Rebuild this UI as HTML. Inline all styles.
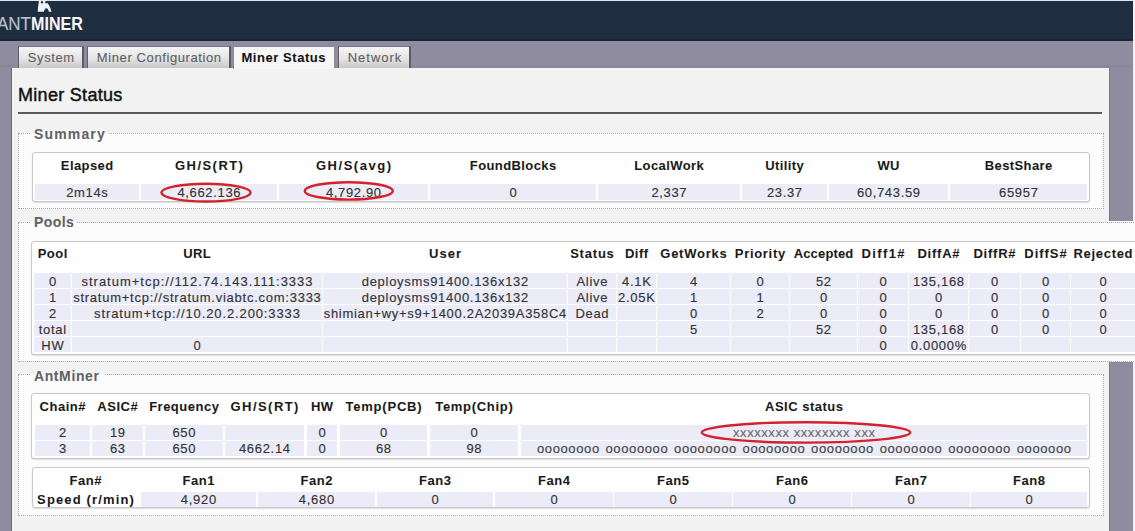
<!DOCTYPE html>
<html><head><meta charset="utf-8"><title>Miner Status</title>
<style>
html,body{margin:0;padding:0;}
body{width:1135px;height:531px;overflow:hidden;position:relative;font-family:"Liberation Sans",sans-serif;}
body>div{position:absolute;}
.t{box-sizing:border-box;line-height:20px;height:20px;white-space:pre;overflow:visible;-webkit-text-stroke:0.15px currentColor;}
</style></head><body>
<div style="left:0px;top:0px;width:1135px;height:531px;background:#f2f2f2"></div>
<div style="left:0px;top:0px;width:1133px;height:531px;background:#8e8c9e"></div>
<div style="left:0px;top:0px;width:1133px;height:41px;background:#1f2d41"></div>
<div style="left:0px;top:0px;width:1133px;height:1px;background:#dfe6ec"></div>
<div style="left:0px;top:39px;width:1133px;height:2px;background:#1b2538"></div>
<div style="left:0px;top:65px;width:1133px;height:3px;background:#8a889a"></div>
<div style="left:11px;top:68px;width:1097px;height:463px;background:#f2f2f3;border-left:1px solid #6f6c7c;border-right:1px solid #7a7888"></div>
<div style="left:1109px;top:221px;width:26px;height:141px;background:#fcfcfd"></div>
<svg style="position:absolute;left:0;top:0" width="120" height="41" viewBox="0 0 120 41">
<path d="M39 0.6 L45.6 0.6 C47.6 3 50.4 6.6 51.5 11.8 L48.8 11.8 C48.5 9.6 47.6 8.2 46.4 8.2 C45.2 8.2 44.3 9.6 44 11.8 L37.7 11.8 C37.9 7.5 38.6 3.5 39 0.6 Z" fill="#eef2f6"/>
<ellipse cx="42" cy="2.2" rx="1.1" ry="1.3" fill="#1f2d41"/><ellipse cx="46.3" cy="2.3" rx="1.1" ry="1.3" fill="#1f2d41"/>
</svg>
<div class="t" style="left:-40px;top:13.59px;width:71px;font-size:18.5px;color:#b9c2cc;letter-spacing:0.0px;text-align:right;transform:scaleX(0.92);transform-origin:100% 50%">ANT</div>
<div class="t" style="left:31px;top:13.59px;width:89px;font-size:18.5px;font-weight:bold;-webkit-text-stroke:0.05px currentColor;color:#f4f6f8;letter-spacing:0px;text-align:left;transform:scaleX(0.87);transform-origin:0 50%">MINER</div>
<div style="left:18px;top:46px;width:66px;height:22px;background:linear-gradient(#f6f6f6,#e4e4e4 55%,#c8c8c8);border-left:1px solid #5f5d6b;border-top:1px solid #76748a;border-right:2px solid #5d5a68;box-sizing:border-box"></div>
<div class="t" style="left:18px;top:47.50px;width:66px;font-size:13px;color:#606060;letter-spacing:0.6px;text-align:center;padding-left:0.60px;-webkit-text-stroke:0.1px #606060">System</div>
<div style="left:87px;top:46px;width:144px;height:22px;background:linear-gradient(#f6f6f6,#e4e4e4 55%,#c8c8c8);border-left:1px solid #5f5d6b;border-top:1px solid #76748a;border-right:2px solid #5d5a68;box-sizing:border-box"></div>
<div class="t" style="left:87px;top:47.50px;width:144px;font-size:13px;color:#606060;letter-spacing:0.6px;text-align:center;padding-left:0.60px;-webkit-text-stroke:0.1px #606060">Miner Configuration</div>
<div style="left:233px;top:46px;width:101px;height:23px;background:#f6f6f7;border-left:1px solid #8a8898;border-top:1px solid #8a8898;box-sizing:border-box"></div>
<div class="t" style="left:233px;top:47.50px;width:101px;font-size:13px;font-weight:bold;-webkit-text-stroke:0.05px currentColor;color:#111;letter-spacing:0.55px;text-align:center;padding-left:0.55px;">Miner Status</div>
<div style="left:338px;top:46px;width:73px;height:22px;background:linear-gradient(#f6f6f6,#e4e4e4 55%,#c8c8c8);border-left:1px solid #5f5d6b;border-top:1px solid #76748a;border-right:2px solid #5d5a68;box-sizing:border-box"></div>
<div class="t" style="left:338px;top:47.50px;width:73px;font-size:13px;color:#606060;letter-spacing:1.0px;text-align:center;padding-left:1.00px;-webkit-text-stroke:0.1px #606060">Network</div>
<div class="t" style="left:18px;top:84.76px;width:182px;font-size:18px;color:#111;letter-spacing:0.3px;text-align:left;-webkit-text-stroke:0.45px #111">Miner Status</div>
<div style="left:18px;top:112px;width:1084px;height:2px;background:#5a5a5a"></div>
<div style="left:18px;top:133px;width:1086px;height:76px;border:1px dotted #a6a6a6;box-sizing:border-box;background:#fcfcfd"></div>
<div style="left:31px;top:133px;width:77px;height:1px;background:#fcfcfd"></div>
<div class="t" style="left:34px;top:123.65px;width:90px;font-size:14px;font-weight:bold;-webkit-text-stroke:0.05px currentColor;color:#626262;letter-spacing:1.15px;text-align:left;">Summary</div>
<div style="left:18px;top:222px;width:1142px;height:140px;border:1px dotted #a6a6a6;box-sizing:border-box;background:#fcfcfd"></div>
<div style="left:31px;top:222px;width:46px;height:1px;background:#fcfcfd"></div>
<div class="t" style="left:34px;top:212.15px;width:59px;font-size:14px;font-weight:bold;-webkit-text-stroke:0.05px currentColor;color:#626262;letter-spacing:0.4px;text-align:left;">Pools</div>
<div style="left:18px;top:374px;width:1086px;height:142px;border:1px dotted #a6a6a6;box-sizing:border-box;background:#fcfcfd"></div>
<div style="left:31px;top:374px;width:73px;height:1px;background:#fcfcfd"></div>
<div class="t" style="left:34px;top:365.65px;width:86px;font-size:14px;font-weight:bold;-webkit-text-stroke:0.05px currentColor;color:#626262;letter-spacing:0.6px;text-align:left;">AntMiner</div>
<div style="left:32px;top:152px;width:1058px;height:50px;background:#fff;border:1px solid #c9c9c9;border-radius:3px;box-sizing:border-box;box-shadow:0 1px 1px #ddd"></div>
<div style="left:35px;top:184px;width:104px;height:16px;background:#ececf8"></div>
<div style="left:141px;top:184px;width:136px;height:16px;background:#ececf8"></div>
<div style="left:279px;top:184px;width:149px;height:16px;background:#ececf8"></div>
<div style="left:430px;top:184px;width:166px;height:16px;background:#ececf8"></div>
<div style="left:598px;top:184px;width:142px;height:16px;background:#ececf8"></div>
<div style="left:742px;top:184px;width:85px;height:16px;background:#ececf8"></div>
<div style="left:829px;top:184px;width:119px;height:16px;background:#ececf8"></div>
<div style="left:950px;top:184px;width:137px;height:16px;background:#ececf8"></div>
<div class="t" style="left:35px;top:155.50px;width:104px;font-size:13px;font-weight:bold;-webkit-text-stroke:0.05px currentColor;color:#1a1a1a;letter-spacing:0.4px;text-align:center;padding-left:0.40px;">Elapsed</div>
<div class="t" style="left:35px;top:182.50px;width:104px;font-size:13px;color:#333;letter-spacing:0.65px;text-align:center;padding-left:0.65px;">2m14s</div>
<div class="t" style="left:141px;top:155.50px;width:136px;font-size:13px;font-weight:bold;-webkit-text-stroke:0.05px currentColor;color:#1a1a1a;letter-spacing:1.45px;text-align:center;padding-left:1.45px;">GH/S(RT)</div>
<div class="t" style="left:141px;top:182.50px;width:136px;font-size:13px;color:#333;letter-spacing:0.65px;text-align:center;padding-left:0.65px;">4,662.136</div>
<div class="t" style="left:279px;top:155.50px;width:149px;font-size:13px;font-weight:bold;-webkit-text-stroke:0.05px currentColor;color:#1a1a1a;letter-spacing:1.55px;text-align:center;padding-left:1.55px;">GH/S(avg)</div>
<div class="t" style="left:279px;top:182.50px;width:149px;font-size:13px;color:#333;letter-spacing:0.65px;text-align:center;padding-left:0.65px;">4,792.90</div>
<div class="t" style="left:430px;top:155.50px;width:166px;font-size:13px;font-weight:bold;-webkit-text-stroke:0.05px currentColor;color:#1a1a1a;letter-spacing:0.4px;text-align:center;padding-left:0.40px;">FoundBlocks</div>
<div class="t" style="left:430px;top:182.50px;width:166px;font-size:13px;color:#333;letter-spacing:0.65px;text-align:center;padding-left:0.65px;">0</div>
<div class="t" style="left:598px;top:155.50px;width:142px;font-size:13px;font-weight:bold;-webkit-text-stroke:0.05px currentColor;color:#1a1a1a;letter-spacing:0.4px;text-align:center;padding-left:0.40px;">LocalWork</div>
<div class="t" style="left:598px;top:182.50px;width:142px;font-size:13px;color:#333;letter-spacing:0.65px;text-align:center;padding-left:0.65px;">2,337</div>
<div class="t" style="left:742px;top:155.50px;width:85px;font-size:13px;font-weight:bold;-webkit-text-stroke:0.05px currentColor;color:#1a1a1a;letter-spacing:0.4px;text-align:center;padding-left:0.40px;">Utility</div>
<div class="t" style="left:742px;top:182.50px;width:85px;font-size:13px;color:#333;letter-spacing:0.65px;text-align:center;padding-left:0.65px;">23.37</div>
<div class="t" style="left:829px;top:155.50px;width:119px;font-size:13px;font-weight:bold;-webkit-text-stroke:0.05px currentColor;color:#1a1a1a;letter-spacing:0.4px;text-align:center;padding-left:0.40px;">WU</div>
<div class="t" style="left:829px;top:182.50px;width:119px;font-size:13px;color:#333;letter-spacing:0.65px;text-align:center;padding-left:0.65px;">60,743.59</div>
<div class="t" style="left:950px;top:155.50px;width:137px;font-size:13px;font-weight:bold;-webkit-text-stroke:0.05px currentColor;color:#1a1a1a;letter-spacing:0.4px;text-align:center;padding-left:0.40px;">BestShare</div>
<div class="t" style="left:950px;top:182.50px;width:137px;font-size:13px;color:#333;letter-spacing:0.65px;text-align:center;padding-left:0.65px;">65957</div>
<div style="left:31px;top:241px;width:1129px;height:114px;background:#fff;border:1px solid #c9c9c9;border-radius:3px;box-sizing:border-box;box-shadow:0 1px 1px #ddd"></div>
<div class="t" style="left:34px;top:243.50px;width:37px;font-size:13px;font-weight:bold;-webkit-text-stroke:0.05px currentColor;color:#1a1a1a;letter-spacing:0.45px;text-align:center;padding-left:0.45px;">Pool</div>
<div class="t" style="left:72px;top:243.50px;width:250px;font-size:13px;font-weight:bold;-webkit-text-stroke:0.05px currentColor;color:#1a1a1a;letter-spacing:0.45px;text-align:center;padding-left:0.45px;">URL</div>
<div class="t" style="left:323px;top:243.50px;width:244px;font-size:13px;font-weight:bold;-webkit-text-stroke:0.05px currentColor;color:#1a1a1a;letter-spacing:1.0px;text-align:center;padding-left:1.00px;">User</div>
<div class="t" style="left:568px;top:243.50px;width:48px;font-size:13px;font-weight:bold;-webkit-text-stroke:0.05px currentColor;color:#1a1a1a;letter-spacing:0.8px;text-align:center;padding-left:0.80px;">Status</div>
<div class="t" style="left:617px;top:243.50px;width:39px;font-size:13px;font-weight:bold;-webkit-text-stroke:0.05px currentColor;color:#1a1a1a;letter-spacing:0.45px;text-align:center;padding-left:0.45px;">Diff</div>
<div class="t" style="left:657px;top:243.50px;width:73px;font-size:13px;font-weight:bold;-webkit-text-stroke:0.05px currentColor;color:#1a1a1a;letter-spacing:0.75px;text-align:center;padding-left:0.75px;">GetWorks</div>
<div class="t" style="left:731px;top:243.50px;width:58px;font-size:13px;font-weight:bold;-webkit-text-stroke:0.05px currentColor;color:#1a1a1a;letter-spacing:0.7px;text-align:center;padding-left:0.70px;">Priority</div>
<div class="t" style="left:790px;top:243.50px;width:67px;font-size:13px;font-weight:bold;-webkit-text-stroke:0.05px currentColor;color:#1a1a1a;letter-spacing:0.15px;text-align:center;padding-left:0.15px;">Accepted</div>
<div class="t" style="left:858px;top:243.50px;width:50px;font-size:13px;font-weight:bold;-webkit-text-stroke:0.05px currentColor;color:#1a1a1a;letter-spacing:1.4px;text-align:center;padding-left:1.40px;">Diff1#</div>
<div class="t" style="left:909px;top:243.50px;width:59px;font-size:13px;font-weight:bold;-webkit-text-stroke:0.05px currentColor;color:#1a1a1a;letter-spacing:0.75px;text-align:center;padding-left:0.75px;">DiffA#</div>
<div class="t" style="left:969px;top:243.50px;width:51px;font-size:13px;font-weight:bold;-webkit-text-stroke:0.05px currentColor;color:#1a1a1a;letter-spacing:0.75px;text-align:center;padding-left:0.75px;">DiffR#</div>
<div class="t" style="left:1021px;top:243.50px;width:49px;font-size:13px;font-weight:bold;-webkit-text-stroke:0.05px currentColor;color:#1a1a1a;letter-spacing:0.95px;text-align:center;padding-left:0.95px;">DiffS#</div>
<div class="t" style="left:1071px;top:243.50px;width:64px;font-size:13px;font-weight:bold;-webkit-text-stroke:0.05px currentColor;color:#1a1a1a;letter-spacing:0.7px;text-align:center;padding-left:0.70px;">Rejected</div>
<div style="left:34px;top:273px;width:37px;height:15px;background:#ececf8"></div>
<div style="left:72px;top:273px;width:250px;height:15px;background:#ececf8"></div>
<div style="left:323px;top:273px;width:244px;height:15px;background:#ececf8"></div>
<div style="left:568px;top:273px;width:48px;height:15px;background:#ececf8"></div>
<div style="left:617px;top:273px;width:39px;height:15px;background:#ececf8"></div>
<div style="left:657px;top:273px;width:73px;height:15px;background:#ececf8"></div>
<div style="left:731px;top:273px;width:58px;height:15px;background:#ececf8"></div>
<div style="left:790px;top:273px;width:67px;height:15px;background:#ececf8"></div>
<div style="left:858px;top:273px;width:50px;height:15px;background:#ececf8"></div>
<div style="left:909px;top:273px;width:59px;height:15px;background:#ececf8"></div>
<div style="left:969px;top:273px;width:51px;height:15px;background:#ececf8"></div>
<div style="left:1021px;top:273px;width:49px;height:15px;background:#ececf8"></div>
<div style="left:1071px;top:273px;width:64px;height:15px;background:#ececf8"></div>
<div class="t" style="left:34px;top:271.50px;width:37px;font-size:13px;color:#333;letter-spacing:0.7px;text-align:center;padding-left:0.70px;">0</div>
<div class="t" style="left:72px;top:271.50px;width:250px;font-size:13px;color:#333;letter-spacing:1.0px;text-align:center;padding-left:1.00px;">stratum+tcp://112.74.143.111:3333</div>
<div class="t" style="left:323px;top:271.50px;width:244px;font-size:13px;color:#333;letter-spacing:0.7px;text-align:center;padding-left:0.70px;">deploysms91400.136x132</div>
<div class="t" style="left:568px;top:271.50px;width:48px;font-size:13px;color:#333;letter-spacing:0.7px;text-align:center;padding-left:0.70px;">Alive</div>
<div class="t" style="left:617px;top:271.50px;width:39px;font-size:13px;color:#333;letter-spacing:0.7px;text-align:center;padding-left:0.70px;">4.1K</div>
<div class="t" style="left:657px;top:271.50px;width:73px;font-size:13px;color:#333;letter-spacing:0.7px;text-align:center;padding-left:0.70px;">4</div>
<div class="t" style="left:731px;top:271.50px;width:58px;font-size:13px;color:#333;letter-spacing:0.7px;text-align:center;padding-left:0.70px;">0</div>
<div class="t" style="left:790px;top:271.50px;width:67px;font-size:13px;color:#333;letter-spacing:0.7px;text-align:center;padding-left:0.70px;">52</div>
<div class="t" style="left:858px;top:271.50px;width:50px;font-size:13px;color:#333;letter-spacing:0.7px;text-align:center;padding-left:0.70px;">0</div>
<div class="t" style="left:909px;top:271.50px;width:59px;font-size:13px;color:#333;letter-spacing:0.7px;text-align:center;padding-left:0.70px;">135,168</div>
<div class="t" style="left:969px;top:271.50px;width:51px;font-size:13px;color:#333;letter-spacing:0.7px;text-align:center;padding-left:0.70px;">0</div>
<div class="t" style="left:1021px;top:271.50px;width:49px;font-size:13px;color:#333;letter-spacing:0.7px;text-align:center;padding-left:0.70px;">0</div>
<div class="t" style="left:1071px;top:271.50px;width:64px;font-size:13px;color:#333;letter-spacing:0.7px;text-align:center;padding-left:0.70px;">0</div>
<div style="left:34px;top:289px;width:37px;height:15px;background:#ececf8"></div>
<div style="left:72px;top:289px;width:250px;height:15px;background:#ececf8"></div>
<div style="left:323px;top:289px;width:244px;height:15px;background:#ececf8"></div>
<div style="left:568px;top:289px;width:48px;height:15px;background:#ececf8"></div>
<div style="left:617px;top:289px;width:39px;height:15px;background:#ececf8"></div>
<div style="left:657px;top:289px;width:73px;height:15px;background:#ececf8"></div>
<div style="left:731px;top:289px;width:58px;height:15px;background:#ececf8"></div>
<div style="left:790px;top:289px;width:67px;height:15px;background:#ececf8"></div>
<div style="left:858px;top:289px;width:50px;height:15px;background:#ececf8"></div>
<div style="left:909px;top:289px;width:59px;height:15px;background:#ececf8"></div>
<div style="left:969px;top:289px;width:51px;height:15px;background:#ececf8"></div>
<div style="left:1021px;top:289px;width:49px;height:15px;background:#ececf8"></div>
<div style="left:1071px;top:289px;width:64px;height:15px;background:#ececf8"></div>
<div class="t" style="left:34px;top:287.50px;width:37px;font-size:13px;color:#333;letter-spacing:0.7px;text-align:center;padding-left:0.70px;">1</div>
<div class="t" style="left:72px;top:287.50px;width:250px;font-size:13px;color:#333;letter-spacing:0.75px;text-align:center;padding-left:0.75px;">stratum+tcp://stratum.viabtc.com:3333</div>
<div class="t" style="left:323px;top:287.50px;width:244px;font-size:13px;color:#333;letter-spacing:0.7px;text-align:center;padding-left:0.70px;">deploysms91400.136x132</div>
<div class="t" style="left:568px;top:287.50px;width:48px;font-size:13px;color:#333;letter-spacing:0.7px;text-align:center;padding-left:0.70px;">Alive</div>
<div class="t" style="left:617px;top:287.50px;width:39px;font-size:13px;color:#333;letter-spacing:0.7px;text-align:center;padding-left:0.70px;">2.05K</div>
<div class="t" style="left:657px;top:287.50px;width:73px;font-size:13px;color:#333;letter-spacing:0.7px;text-align:center;padding-left:0.70px;">1</div>
<div class="t" style="left:731px;top:287.50px;width:58px;font-size:13px;color:#333;letter-spacing:0.7px;text-align:center;padding-left:0.70px;">1</div>
<div class="t" style="left:790px;top:287.50px;width:67px;font-size:13px;color:#333;letter-spacing:0.7px;text-align:center;padding-left:0.70px;">0</div>
<div class="t" style="left:858px;top:287.50px;width:50px;font-size:13px;color:#333;letter-spacing:0.7px;text-align:center;padding-left:0.70px;">0</div>
<div class="t" style="left:909px;top:287.50px;width:59px;font-size:13px;color:#333;letter-spacing:0.7px;text-align:center;padding-left:0.70px;">0</div>
<div class="t" style="left:969px;top:287.50px;width:51px;font-size:13px;color:#333;letter-spacing:0.7px;text-align:center;padding-left:0.70px;">0</div>
<div class="t" style="left:1021px;top:287.50px;width:49px;font-size:13px;color:#333;letter-spacing:0.7px;text-align:center;padding-left:0.70px;">0</div>
<div class="t" style="left:1071px;top:287.50px;width:64px;font-size:13px;color:#333;letter-spacing:0.7px;text-align:center;padding-left:0.70px;">0</div>
<div style="left:34px;top:305px;width:37px;height:15px;background:#ececf8"></div>
<div style="left:72px;top:305px;width:250px;height:15px;background:#ececf8"></div>
<div style="left:323px;top:305px;width:244px;height:15px;background:#ececf8"></div>
<div style="left:568px;top:305px;width:48px;height:15px;background:#ececf8"></div>
<div style="left:617px;top:305px;width:39px;height:15px;background:#ececf8"></div>
<div style="left:657px;top:305px;width:73px;height:15px;background:#ececf8"></div>
<div style="left:731px;top:305px;width:58px;height:15px;background:#ececf8"></div>
<div style="left:790px;top:305px;width:67px;height:15px;background:#ececf8"></div>
<div style="left:858px;top:305px;width:50px;height:15px;background:#ececf8"></div>
<div style="left:909px;top:305px;width:59px;height:15px;background:#ececf8"></div>
<div style="left:969px;top:305px;width:51px;height:15px;background:#ececf8"></div>
<div style="left:1021px;top:305px;width:49px;height:15px;background:#ececf8"></div>
<div style="left:1071px;top:305px;width:64px;height:15px;background:#ececf8"></div>
<div class="t" style="left:34px;top:303.50px;width:37px;font-size:13px;color:#333;letter-spacing:0.7px;text-align:center;padding-left:0.70px;">2</div>
<div class="t" style="left:72px;top:303.50px;width:250px;font-size:13px;color:#333;letter-spacing:0.88px;text-align:center;padding-left:0.88px;">stratum+tcp://10.20.2.200:3333</div>
<div class="t" style="left:323px;top:303.50px;width:244px;font-size:13px;color:#333;letter-spacing:0.7px;text-align:center;padding-left:0.70px;">shimian+wy+s9+1400.2A2039A358C4</div>
<div class="t" style="left:568px;top:303.50px;width:48px;font-size:13px;color:#333;letter-spacing:0.7px;text-align:center;padding-left:0.70px;">Dead</div>
<div class="t" style="left:657px;top:303.50px;width:73px;font-size:13px;color:#333;letter-spacing:0.7px;text-align:center;padding-left:0.70px;">0</div>
<div class="t" style="left:731px;top:303.50px;width:58px;font-size:13px;color:#333;letter-spacing:0.7px;text-align:center;padding-left:0.70px;">2</div>
<div class="t" style="left:790px;top:303.50px;width:67px;font-size:13px;color:#333;letter-spacing:0.7px;text-align:center;padding-left:0.70px;">0</div>
<div class="t" style="left:858px;top:303.50px;width:50px;font-size:13px;color:#333;letter-spacing:0.7px;text-align:center;padding-left:0.70px;">0</div>
<div class="t" style="left:909px;top:303.50px;width:59px;font-size:13px;color:#333;letter-spacing:0.7px;text-align:center;padding-left:0.70px;">0</div>
<div class="t" style="left:969px;top:303.50px;width:51px;font-size:13px;color:#333;letter-spacing:0.7px;text-align:center;padding-left:0.70px;">0</div>
<div class="t" style="left:1021px;top:303.50px;width:49px;font-size:13px;color:#333;letter-spacing:0.7px;text-align:center;padding-left:0.70px;">0</div>
<div class="t" style="left:1071px;top:303.50px;width:64px;font-size:13px;color:#333;letter-spacing:0.7px;text-align:center;padding-left:0.70px;">0</div>
<div style="left:34px;top:321px;width:37px;height:15px;background:#ececf8"></div>
<div style="left:72px;top:321px;width:250px;height:15px;background:#ececf8"></div>
<div style="left:323px;top:321px;width:244px;height:15px;background:#ececf8"></div>
<div style="left:568px;top:321px;width:48px;height:15px;background:#ececf8"></div>
<div style="left:617px;top:321px;width:39px;height:15px;background:#ececf8"></div>
<div style="left:657px;top:321px;width:73px;height:15px;background:#ececf8"></div>
<div style="left:731px;top:321px;width:58px;height:15px;background:#ececf8"></div>
<div style="left:790px;top:321px;width:67px;height:15px;background:#ececf8"></div>
<div style="left:858px;top:321px;width:50px;height:15px;background:#ececf8"></div>
<div style="left:909px;top:321px;width:59px;height:15px;background:#ececf8"></div>
<div style="left:969px;top:321px;width:51px;height:15px;background:#ececf8"></div>
<div style="left:1021px;top:321px;width:49px;height:15px;background:#ececf8"></div>
<div style="left:1071px;top:321px;width:64px;height:15px;background:#ececf8"></div>
<div class="t" style="left:34px;top:319.50px;width:37px;font-size:13px;color:#333;letter-spacing:0.7px;text-align:center;padding-left:0.70px;">total</div>
<div class="t" style="left:657px;top:319.50px;width:73px;font-size:13px;color:#333;letter-spacing:0.7px;text-align:center;padding-left:0.70px;">5</div>
<div class="t" style="left:790px;top:319.50px;width:67px;font-size:13px;color:#333;letter-spacing:0.7px;text-align:center;padding-left:0.70px;">52</div>
<div class="t" style="left:858px;top:319.50px;width:50px;font-size:13px;color:#333;letter-spacing:0.7px;text-align:center;padding-left:0.70px;">0</div>
<div class="t" style="left:909px;top:319.50px;width:59px;font-size:13px;color:#333;letter-spacing:0.7px;text-align:center;padding-left:0.70px;">135,168</div>
<div class="t" style="left:969px;top:319.50px;width:51px;font-size:13px;color:#333;letter-spacing:0.7px;text-align:center;padding-left:0.70px;">0</div>
<div class="t" style="left:1021px;top:319.50px;width:49px;font-size:13px;color:#333;letter-spacing:0.7px;text-align:center;padding-left:0.70px;">0</div>
<div class="t" style="left:1071px;top:319.50px;width:64px;font-size:13px;color:#333;letter-spacing:0.7px;text-align:center;padding-left:0.70px;">0</div>
<div style="left:34px;top:337px;width:37px;height:15px;background:#ececf8"></div>
<div style="left:72px;top:337px;width:250px;height:15px;background:#ececf8"></div>
<div style="left:323px;top:337px;width:244px;height:15px;background:#ececf8"></div>
<div style="left:568px;top:337px;width:48px;height:15px;background:#ececf8"></div>
<div style="left:617px;top:337px;width:39px;height:15px;background:#ececf8"></div>
<div style="left:657px;top:337px;width:73px;height:15px;background:#ececf8"></div>
<div style="left:731px;top:337px;width:58px;height:15px;background:#ececf8"></div>
<div style="left:790px;top:337px;width:67px;height:15px;background:#ececf8"></div>
<div style="left:858px;top:337px;width:50px;height:15px;background:#ececf8"></div>
<div style="left:909px;top:337px;width:59px;height:15px;background:#ececf8"></div>
<div style="left:969px;top:337px;width:51px;height:15px;background:#ececf8"></div>
<div style="left:1021px;top:337px;width:49px;height:15px;background:#ececf8"></div>
<div style="left:1071px;top:337px;width:64px;height:15px;background:#ececf8"></div>
<div class="t" style="left:34px;top:335.50px;width:37px;font-size:13px;color:#333;letter-spacing:0.7px;text-align:center;padding-left:0.70px;">HW</div>
<div class="t" style="left:72px;top:335.50px;width:250px;font-size:13px;color:#333;letter-spacing:0.7px;text-align:center;padding-left:0.70px;">0</div>
<div class="t" style="left:858px;top:335.50px;width:50px;font-size:13px;color:#333;letter-spacing:0.7px;text-align:center;padding-left:0.70px;">0</div>
<div class="t" style="left:909px;top:335.50px;width:59px;font-size:13px;color:#333;letter-spacing:0.7px;text-align:center;padding-left:0.70px;">0.0000%</div>
<div style="left:31px;top:393px;width:1059px;height:66px;background:#fff;border:1px solid #c9c9c9;border-radius:3px;box-sizing:border-box;box-shadow:0 1px 1px #ddd"></div>
<div class="t" style="left:35px;top:396.50px;width:55px;font-size:13px;font-weight:bold;-webkit-text-stroke:0.05px currentColor;color:#1a1a1a;letter-spacing:0.5px;text-align:center;padding-left:0.50px;">Chain#</div>
<div class="t" style="left:92px;top:396.50px;width:51px;font-size:13px;font-weight:bold;-webkit-text-stroke:0.05px currentColor;color:#1a1a1a;letter-spacing:0.5px;text-align:center;padding-left:0.50px;">ASIC#</div>
<div class="t" style="left:145px;top:396.50px;width:78px;font-size:13px;font-weight:bold;-webkit-text-stroke:0.05px currentColor;color:#1a1a1a;letter-spacing:0.5px;text-align:center;padding-left:0.50px;">Frequency</div>
<div class="t" style="left:225px;top:396.50px;width:79px;font-size:13px;font-weight:bold;-webkit-text-stroke:0.05px currentColor;color:#1a1a1a;letter-spacing:1.45px;text-align:center;padding-left:1.45px;">GH/S(RT)</div>
<div class="t" style="left:307px;top:396.50px;width:30px;font-size:13px;font-weight:bold;-webkit-text-stroke:0.05px currentColor;color:#1a1a1a;letter-spacing:0.5px;text-align:center;padding-left:0.50px;">HW</div>
<div class="t" style="left:340px;top:396.50px;width:87px;font-size:13px;font-weight:bold;-webkit-text-stroke:0.05px currentColor;color:#1a1a1a;letter-spacing:0.8px;text-align:center;padding-left:0.80px;">Temp(PCB)</div>
<div class="t" style="left:430px;top:396.50px;width:88px;font-size:13px;font-weight:bold;-webkit-text-stroke:0.05px currentColor;color:#1a1a1a;letter-spacing:0.7px;text-align:center;padding-left:0.70px;">Temp(Chip)</div>
<div class="t" style="left:521px;top:396.50px;width:566px;font-size:13px;font-weight:bold;-webkit-text-stroke:0.05px currentColor;color:#1a1a1a;letter-spacing:0.5px;text-align:center;padding-left:0.50px;">ASIC status</div>
<div style="left:35px;top:425px;width:55px;height:15px;background:#ececf8"></div>
<div style="left:92px;top:425px;width:51px;height:15px;background:#ececf8"></div>
<div style="left:145px;top:425px;width:78px;height:15px;background:#ececf8"></div>
<div style="left:225px;top:425px;width:79px;height:15px;background:#ececf8"></div>
<div style="left:307px;top:425px;width:30px;height:15px;background:#ececf8"></div>
<div style="left:340px;top:425px;width:87px;height:15px;background:#ececf8"></div>
<div style="left:430px;top:425px;width:88px;height:15px;background:#ececf8"></div>
<div style="left:521px;top:425px;width:566px;height:15px;background:#ececf8"></div>
<div class="t" style="left:35px;top:423.00px;width:55px;font-size:13px;color:#333;letter-spacing:0.7px;text-align:center;padding-left:0.70px;">2</div>
<div class="t" style="left:92px;top:423.00px;width:51px;font-size:13px;color:#333;letter-spacing:0.7px;text-align:center;padding-left:0.70px;">19</div>
<div class="t" style="left:145px;top:423.00px;width:78px;font-size:13px;color:#333;letter-spacing:0.7px;text-align:center;padding-left:0.70px;">650</div>
<div class="t" style="left:307px;top:423.00px;width:30px;font-size:13px;color:#333;letter-spacing:0.7px;text-align:center;padding-left:0.70px;">0</div>
<div class="t" style="left:340px;top:423.00px;width:87px;font-size:13px;color:#333;letter-spacing:0.7px;text-align:center;padding-left:0.70px;">0</div>
<div class="t" style="left:430px;top:423.00px;width:88px;font-size:13px;color:#333;letter-spacing:0.7px;text-align:center;padding-left:0.70px;">0</div>
<div class="t" style="left:521px;top:423.00px;width:566px;font-size:13px;color:#6c6c6c;letter-spacing:0.56px;text-align:center;padding-left:0.56px;">xxxxxxxx xxxxxxxx xxx</div>
<div style="left:35px;top:441px;width:55px;height:15px;background:#ececf8"></div>
<div style="left:92px;top:441px;width:51px;height:15px;background:#ececf8"></div>
<div style="left:145px;top:441px;width:78px;height:15px;background:#ececf8"></div>
<div style="left:225px;top:441px;width:79px;height:15px;background:#ececf8"></div>
<div style="left:307px;top:441px;width:30px;height:15px;background:#ececf8"></div>
<div style="left:340px;top:441px;width:87px;height:15px;background:#ececf8"></div>
<div style="left:430px;top:441px;width:88px;height:15px;background:#ececf8"></div>
<div style="left:521px;top:441px;width:566px;height:15px;background:#ececf8"></div>
<div class="t" style="left:35px;top:439.00px;width:55px;font-size:13px;color:#333;letter-spacing:0.7px;text-align:center;padding-left:0.70px;">3</div>
<div class="t" style="left:92px;top:439.00px;width:51px;font-size:13px;color:#333;letter-spacing:0.7px;text-align:center;padding-left:0.70px;">63</div>
<div class="t" style="left:145px;top:439.00px;width:78px;font-size:13px;color:#333;letter-spacing:0.7px;text-align:center;padding-left:0.70px;">650</div>
<div class="t" style="left:225px;top:439.00px;width:79px;font-size:13px;color:#333;letter-spacing:0.7px;text-align:center;padding-left:0.70px;">4662.14</div>
<div class="t" style="left:307px;top:439.00px;width:30px;font-size:13px;color:#333;letter-spacing:0.7px;text-align:center;padding-left:0.70px;">0</div>
<div class="t" style="left:340px;top:439.00px;width:87px;font-size:13px;color:#333;letter-spacing:0.7px;text-align:center;padding-left:0.70px;">68</div>
<div class="t" style="left:430px;top:439.00px;width:88px;font-size:13px;color:#333;letter-spacing:0.7px;text-align:center;padding-left:0.70px;">98</div>
<div class="t" style="left:521px;top:439.00px;width:566px;font-size:13px;color:#444;letter-spacing:0.62px;text-align:center;padding-left:0.62px;word-spacing:1.5px">oooooooo oooooooo oooooooo oooooooo oooooooo oooooooo oooooooo ooooooo</div>
<div style="left:32px;top:467px;width:1058px;height:41px;background:#fff;border:1px solid #c9c9c9;border-radius:3px;box-sizing:border-box;box-shadow:0 1px 1px #ddd"></div>
<div style="left:141px;top:492px;width:115px;height:15px;background:#ececf8"></div>
<div style="left:258px;top:492px;width:117px;height:15px;background:#ececf8"></div>
<div style="left:377px;top:492px;width:116px;height:15px;background:#ececf8"></div>
<div style="left:495px;top:492px;width:118px;height:15px;background:#ececf8"></div>
<div style="left:614px;top:492px;width:118px;height:15px;background:#ececf8"></div>
<div style="left:733px;top:492px;width:118px;height:15px;background:#ececf8"></div>
<div style="left:852px;top:492px;width:118px;height:15px;background:#ececf8"></div>
<div style="left:971px;top:492px;width:116px;height:15px;background:#ececf8"></div>
<div class="t" style="left:33px;top:470.50px;width:105px;font-size:13px;font-weight:bold;-webkit-text-stroke:0.05px currentColor;color:#1a1a1a;letter-spacing:0.5px;text-align:center;padding-left:0.50px;">Fan#</div>
<div class="t" style="left:33px;top:489.50px;width:105px;font-size:13px;font-weight:bold;-webkit-text-stroke:0.05px currentColor;color:#1a1a1a;letter-spacing:1.15px;text-align:center;padding-left:1.15px;">Speed (r/min)</div>
<div class="t" style="left:141px;top:470.50px;width:115px;font-size:13px;font-weight:bold;-webkit-text-stroke:0.05px currentColor;color:#1a1a1a;letter-spacing:0.5px;text-align:center;padding-left:0.50px;">Fan1</div>
<div class="t" style="left:141px;top:489.50px;width:115px;font-size:13px;color:#333;letter-spacing:0.7px;text-align:center;padding-left:0.70px;">4,920</div>
<div class="t" style="left:258px;top:470.50px;width:117px;font-size:13px;font-weight:bold;-webkit-text-stroke:0.05px currentColor;color:#1a1a1a;letter-spacing:0.5px;text-align:center;padding-left:0.50px;">Fan2</div>
<div class="t" style="left:258px;top:489.50px;width:117px;font-size:13px;color:#333;letter-spacing:0.7px;text-align:center;padding-left:0.70px;">4,680</div>
<div class="t" style="left:377px;top:470.50px;width:116px;font-size:13px;font-weight:bold;-webkit-text-stroke:0.05px currentColor;color:#1a1a1a;letter-spacing:0.5px;text-align:center;padding-left:0.50px;">Fan3</div>
<div class="t" style="left:377px;top:489.50px;width:116px;font-size:13px;color:#333;letter-spacing:0.7px;text-align:center;padding-left:0.70px;">0</div>
<div class="t" style="left:495px;top:470.50px;width:118px;font-size:13px;font-weight:bold;-webkit-text-stroke:0.05px currentColor;color:#1a1a1a;letter-spacing:0.5px;text-align:center;padding-left:0.50px;">Fan4</div>
<div class="t" style="left:495px;top:489.50px;width:118px;font-size:13px;color:#333;letter-spacing:0.7px;text-align:center;padding-left:0.70px;">0</div>
<div class="t" style="left:614px;top:470.50px;width:118px;font-size:13px;font-weight:bold;-webkit-text-stroke:0.05px currentColor;color:#1a1a1a;letter-spacing:0.5px;text-align:center;padding-left:0.50px;">Fan5</div>
<div class="t" style="left:614px;top:489.50px;width:118px;font-size:13px;color:#333;letter-spacing:0.7px;text-align:center;padding-left:0.70px;">0</div>
<div class="t" style="left:733px;top:470.50px;width:118px;font-size:13px;font-weight:bold;-webkit-text-stroke:0.05px currentColor;color:#1a1a1a;letter-spacing:0.5px;text-align:center;padding-left:0.50px;">Fan6</div>
<div class="t" style="left:733px;top:489.50px;width:118px;font-size:13px;color:#333;letter-spacing:0.7px;text-align:center;padding-left:0.70px;">0</div>
<div class="t" style="left:852px;top:470.50px;width:118px;font-size:13px;font-weight:bold;-webkit-text-stroke:0.05px currentColor;color:#1a1a1a;letter-spacing:0.5px;text-align:center;padding-left:0.50px;">Fan7</div>
<div class="t" style="left:852px;top:489.50px;width:118px;font-size:13px;color:#333;letter-spacing:0.7px;text-align:center;padding-left:0.70px;">0</div>
<div class="t" style="left:971px;top:470.50px;width:116px;font-size:13px;font-weight:bold;-webkit-text-stroke:0.05px currentColor;color:#1a1a1a;letter-spacing:0.5px;text-align:center;padding-left:0.50px;">Fan8</div>
<div class="t" style="left:971px;top:489.50px;width:116px;font-size:13px;color:#333;letter-spacing:0.7px;text-align:center;padding-left:0.70px;">0</div>
<svg style="position:absolute;left:0;top:0" width="1135" height="531">
<ellipse cx="206" cy="192.6" rx="44.6" ry="8.9" fill="none" stroke="#d3222b" stroke-width="2.4"/>
<ellipse cx="348.8" cy="190.9" rx="44.1" ry="8.7" fill="none" stroke="#d3222b" stroke-width="2.4"/>
<ellipse cx="806" cy="432.4" rx="104.2" ry="10.2" fill="none" stroke="#d3222b" stroke-width="2.4"/>
</svg>
</body></html>
